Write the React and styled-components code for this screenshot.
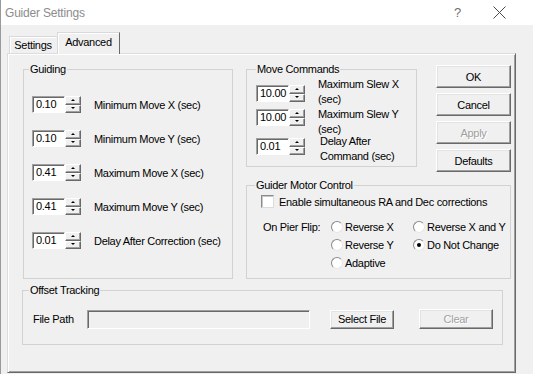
import React from "react";
import styled, { createGlobalStyle } from "styled-components";

const GlobalStyle = createGlobalStyle`
  html, body {
    margin: 0;
    padding: 0;
    background: #f0f0f0;
  }
  body {
    font-family: "Liberation Sans", Arial, sans-serif;
    font-size: 11px;
    letter-spacing: -0.3px;
    color: #000;
  }
`;

const Window = styled.div`
  width: 533px;
  height: 374px;
  overflow: hidden;
  box-sizing: border-box;
  border-left: 1px solid #9a9a9a;
  background: #f0f0f0;
  display: flex;
  flex-direction: column;
`;

const TitleBar = styled.div`
  height: 25px;
  flex-shrink: 0;
  background: #fff;
  display: flex;
  align-items: center;
  padding-left: 4px;
  font-size: 12px;
  letter-spacing: -0.2px;
  color: #8c8c8c;
`;

const Title = styled.span`
  flex: 1;
`;

const HelpMark = styled.span`
  font-size: 13px;
  color: #6f6f6f;
  margin-right: 32px;
`;

const CloseBox = styled.div`
  display: flex;
  margin-right: 27px;
`;

const Body = styled.div`
  padding: 7px 0 0 6px;
`;

const TabRow = styled.div`
  height: 21px;
  display: flex;
  align-items: flex-end;
  padding-left: 2px;
`;

const Tab = styled.div`
  position: relative;
  z-index: ${(p) => (p.$active ? 1 : 0)};
  box-sizing: border-box;
  width: ${(p) => p.$w}px;
  height: ${(p) => (p.$active ? 22 : 17)}px;
  margin-bottom: ${(p) => (p.$active ? -1 : 0)}px;
  background: #f0f0f0;
  border: 1px solid;
  border-bottom: none;
  border-color: #d9d9d9 ${(p) => (p.$active ? "#696969" : "transparent")} transparent #d9d9d9;
  box-shadow: inset 1px 1px #fff;
  display: flex;
  align-items: center;
  justify-content: center;
  padding-bottom: ${(p) => (p.$active ? 3 : 0)}px;
`;

const Panel = styled.div`
  box-sizing: border-box;
  width: 509px;
  height: 320px;
  border: 1px solid;
  border-color: #dcdcdc #696969 #696969 #dcdcdc;
  box-shadow: inset 1px 1px #fff, inset -1px -1px #a0a0a0;
  padding: 8px 0 0 15px;
`;

const TopArea = styled.div`
  display: flex;
  align-items: flex-start;
  gap: 13px;
`;

const Group = styled.fieldset`
  margin: 0;
  padding: 0;
  min-width: 0;
  box-sizing: border-box;
  width: ${(p) => p.$w}px;
  height: ${(p) => p.$h}px;
  flex-shrink: 0;
  border: 1px solid #d2d2d2;
  border-radius: 0;
`;

const Caption = styled.legend`
  margin-left: ${(p) => p.$indent}px;
  padding: 0 1px;
  line-height: 14px;
  font-size: 11px;
`;

const GuideList = styled.div`
  display: flex;
  flex-direction: column;
  gap: 17px;
  padding: 20px 0 0 8px;
`;

const GuideRow = styled.div`
  display: flex;
  align-items: center;
  gap: 13px;
`;

const SpinBox = styled.div`
  display: flex;
  height: 17px;
  flex-shrink: 0;
  margin-top: ${(p) => p.$top || 0}px;
`;

const Edit = styled.div`
  box-sizing: border-box;
  width: 33px;
  height: 100%;
  background: #fff;
  border: 1px solid;
  border-color: #a0a0a0 #fff #fff #a0a0a0;
  box-shadow: inset 1px 1px #696969;
  padding-left: 3px;
  line-height: 15px;
  font-size: 11px;
`;

const SpinButtons = styled.div`
  width: 16px;
  display: flex;
  flex-direction: column;
`;

const SpinHalf = styled.div`
  flex: 1;
  box-sizing: border-box;
  background: #f0f0f0;
  border: 1px solid;
  border-color: #fff #696969 #696969 #fff;
  box-shadow: inset -1px -1px #a0a0a0;
  display: flex;
  align-items: center;
  justify-content: center;

  &::after {
    content: "";
    border-left: 2px solid transparent;
    border-right: 2px solid transparent;
    ${(p) =>
      p.$down
        ? "border-top: 2px solid #000; margin-top: -1px;"
        : "border-bottom: 2px solid #000; margin-top: -1px;"}
  }
`;

const RightCol = styled.div`
  width: 265px;
  display: flex;
  flex-direction: column;
  gap: 11px;
`;

const CommandRow = styled.div`
  display: flex;
  align-items: flex-start;
  height: 105px;
`;

const MoveList = styled.div`
  padding: 1px 0 0 9px;
`;

const MoveRow = styled.div`
  display: flex;
  align-items: flex-start;
  gap: 13px;
  height: ${(p) => p.$h}px;
`;

const MoveLabel = styled.div`
  line-height: 15px;
  margin-left: ${(p) => p.$shift || 0}px;
`;

const ButtonCol = styled.div`
  margin-left: auto;
  padding-top: 3px;
  display: flex;
  flex-direction: column;
  gap: 5px;
`;

const Button = styled.div`
  box-sizing: border-box;
  width: ${(p) => p.$w || 75}px;
  height: ${(p) => p.$h || 23}px;
  margin-left: ${(p) => p.$gap || 0}px;
  flex-shrink: 0;
  background: #f0f0f0;
  border: 1px solid;
  border-color: #fff #696969 #696969 #fff;
  box-shadow: inset -1px -1px #a0a0a0, inset 1px 1px #e3e3e3;
  display: flex;
  align-items: center;
  justify-content: center;
  color: ${(p) => (p.$disabled ? "#a0a0a0" : "#000")};
  text-shadow: ${(p) => (p.$disabled ? "1px 1px #fff" : "none")};
`;

const CheckRow = styled.div`
  display: flex;
  align-items: center;
  gap: 5px;
  margin-top: 3px;
  padding-left: 14px;
`;

const CheckBox = styled.div`
  box-sizing: border-box;
  width: 13px;
  height: 13px;
  background: #fff;
  border: 1px solid;
  border-color: #8a8a8a #dcdcdc #dcdcdc #8a8a8a;
  box-shadow: inset 1px 1px #c8c8c8;
`;

const FlipGrid = styled.div`
  display: grid;
  grid-template-columns: 68px 82px auto;
  grid-auto-rows: 18px;
  align-items: center;
  margin-top: 10px;
  padding-left: 16px;
`;

const RadioItem = styled.div`
  display: flex;
  align-items: center;
  gap: 1px;
  grid-column: ${(p) => p.$col};
`;

const Radio = styled.div`
  box-sizing: border-box;
  width: 12px;
  height: 12px;
  border-radius: 50%;
  background: #fff;
  border: 1px solid;
  border-color: #8a8a8a #e6e6e6 #e6e6e6 #8a8a8a;
  margin-right: 1px;
  display: flex;
  align-items: center;
  justify-content: center;

  &::after {
    content: "";
    width: 4px;
    height: 4px;
    border-radius: 50%;
    background: ${(p) => (p.$checked ? "#000" : "transparent")};
  }
`;

const OffsetGroup = styled(Group)`
  margin: 4px 0 0 -1px;
`;

const OffsetRow = styled.div`
  display: flex;
  align-items: center;
  padding: 12px 0 0 10px;
`;

const FieldLabel = styled.span`
  width: 54px;
`;

const PathField = styled.div`
  box-sizing: border-box;
  width: 223px;
  height: 19px;
  background: #f0f0f0;
  border: 1px solid;
  border-color: #a0a0a0 #fff #fff #a0a0a0;
  box-shadow: inset 1px 1px #696969;
  margin-right: 20px;
`;

const Spin = ({ value, top }) => (
  <SpinBox $top={top}>
    <Edit>{value}</Edit>
    <SpinButtons>
      <SpinHalf />
      <SpinHalf $down />
    </SpinButtons>
  </SpinBox>
);

const RadioOption = ({ col, checked, children }) => (
  <RadioItem $col={col}>
    <Radio $checked={checked} />
    {children}
  </RadioItem>
);

const guiding = [
  ["0.10", "Minimum Move X (sec)"],
  ["0.10", "Minimum Move Y (sec)"],
  ["0.41", "Maximum Move X (sec)"],
  ["0.41", "Maximum Move Y (sec)"],
  ["0.01", "Delay After Correction (sec)"],
];

const moves = [
  { value: "10.00", lines: ["Maximum Slew X", "(sec)"], h: 30, top: 8 },
  { value: "10.00", lines: ["Maximum Slew Y", "(sec)"], h: 27, top: 2 },
  { value: "0.01", lines: ["Delay After", "Command (sec)"], h: 28, top: 4, shift: 2 },
];

export default function App() {
  return (
    <>
      <GlobalStyle />
      <Window>
        <TitleBar>
          <Title>Guider Settings</Title>
          <HelpMark>?</HelpMark>
          <CloseBox>
            <svg width="13" height="13" viewBox="0 0 13 13">
              <path d="M0.5 0.5 L12.5 12.5 M12.5 0.5 L0.5 12.5" stroke="#4a4a4a" strokeWidth="1" fill="none" />
            </svg>
          </CloseBox>
        </TitleBar>
        <Body>
          <TabRow>
            <Tab $w={48}>Settings</Tab>
            <Tab $w={63} $active>Advanced</Tab>
          </TabRow>
          <Panel>
            <TopArea>
              <Group $w={210} $h={217}>
                <Caption $indent={5}>Guiding</Caption>
                <GuideList>
                  {guiding.map(([v, label], i) => (
                    <GuideRow key={i}>
                      <Spin value={v} />
                      <span>{label}</span>
                    </GuideRow>
                  ))}
                </GuideList>
              </Group>
              <RightCol>
                <CommandRow>
                  <Group $w={171} $h={105}>
                    <Caption $indent={9}>Move Commands</Caption>
                    <MoveList>
                      {moves.map((m, i) => (
                        <MoveRow key={i} $h={m.h}>
                          <Spin value={m.value} top={m.top} />
                          <MoveLabel $shift={m.shift}>
                            {m.lines[0]}
                            <br />
                            {m.lines[1]}
                          </MoveLabel>
                        </MoveRow>
                      ))}
                    </MoveList>
                  </Group>
                  <ButtonCol>
                    <Button>OK</Button>
                    <Button>Cancel</Button>
                    <Button $disabled>Apply</Button>
                    <Button>Defaults</Button>
                  </ButtonCol>
                </CommandRow>
                <Group $w={265} $h={101}>
                  <Caption $indent={8}>Guider Motor Control</Caption>
                  <CheckRow>
                    <CheckBox />
                    <span>Enable simultaneous RA and Dec corrections</span>
                  </CheckRow>
                  <FlipGrid>
                    <span>On Pier Flip:</span>
                    <RadioOption col={2}>Reverse X</RadioOption>
                    <RadioOption col={3}>Reverse X and Y</RadioOption>
                    <RadioOption col={2}>Reverse Y</RadioOption>
                    <RadioOption col={3} checked>Do Not Change</RadioOption>
                    <RadioOption col={2}>Adaptive</RadioOption>
                  </FlipGrid>
                </Group>
              </RightCol>
            </TopArea>
            <OffsetGroup $w={481} $h={62}>
              <Caption $indent={6}>Offset Tracking</Caption>
              <OffsetRow>
                <FieldLabel>File Path</FieldLabel>
                <PathField />
                <Button $w={64} $h={19}>Select File</Button>
                <Button $w={74} $h={20} $gap={25} $disabled>Clear</Button>
              </OffsetRow>
            </OffsetGroup>
          </Panel>
        </Body>
      </Window>
    </>
  );
}
